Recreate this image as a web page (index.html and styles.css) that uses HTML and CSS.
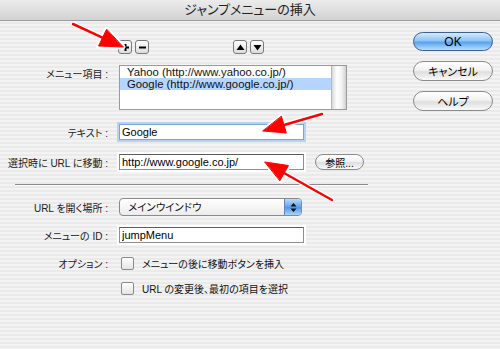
FILE: index.html
```html
<!DOCTYPE html>
<html lang="ja">
  <head>
    <meta charset="UTF-8" />
    <meta name="viewport" content="width=device-width, initial-scale=1.0" />
    <title>ジャンプメニューの挿入</title>
    <link rel="stylesheet" href="styles.css">
  </head>
  <body>
    <div class="window">
      <header class="titlebar">ジャンプメニューの挿入</header>

      <div class="dialog">
        <div class="form">
          <div class="toolbar">
            <span class="tool-group">
              <button class="tool" title="追加">
                <svg width="9" height="9" viewBox="0 0 9 9"><path d="M4.5 1v7M1 4.5h7" stroke="#000" stroke-width="2"/></svg>
              </button>
              <button class="tool" title="削除">
                <svg width="9" height="9" viewBox="0 0 9 9"><path d="M1 4.5h7" stroke="#000" stroke-width="2"/></svg>
              </button>
            </span>
            <span class="tool-group order">
              <button class="tool" title="上へ">
                <svg width="9" height="9" viewBox="0 0 9 9"><path d="M4.5 1.5L8.5 7H0.5z" fill="#000"/></svg>
              </button>
              <button class="tool" title="下へ">
                <svg width="9" height="9" viewBox="0 0 9 9"><path d="M0.5 2H8.5L4.5 7.5z" fill="#000"/></svg>
              </button>
            </span>
          </div>

          <div class="row list-row">
            <label class="label">メニュー項目 :</label>
            <div class="listbox">
              <ul class="items">
                <li>Yahoo (http://www.yahoo.co.jp/)</li>
                <li class="selected">Google (http://www.google.co.jp/)</li>
              </ul>
              <div class="scrollbar"></div>
            </div>
          </div>

          <div class="row text-row">
            <label class="label" for="itemText">テキスト :</label>
            <input class="field focused" id="itemText" type="text" value="Google" />
          </div>

          <div class="row url-row">
            <label class="label" for="itemUrl">選択時に URL に移動 :</label>
            <input class="field" id="itemUrl" type="text" value="http://www.google.co.jp/" />
            <button class="pill small">参照...</button>
          </div>

          <div class="separator"></div>

          <div class="row popup-row">
            <label class="label">URL を開く場所 :</label>
            <div class="popup">
              <span class="popup-text">メインウインドウ</span>
              <span class="popup-arrows">
                <svg width="7" height="11" viewBox="0 0 7 11"><path d="M3.5 1L6.5 4.5H0.5zM0.5 6.5H6.5L3.5 10z" fill="#111"/></svg>
              </span>
            </div>
          </div>

          <div class="row id-row">
            <label class="label" for="menuId">メニューの ID :</label>
            <input class="field" id="menuId" type="text" value="jumpMenu" />
          </div>

          <div class="row check-row first">
            <span class="label">オプション :</span>
            <span class="checkbox"></span>
            <span class="check-text">メニューの後に移動ボタンを挿入</span>
          </div>

          <div class="row check-row">
            <span class="label"></span>
            <span class="checkbox"></span>
            <span class="check-text">URL の変更後、最初の項目を選択</span>
          </div>
        </div>

        <div class="actions">
          <button class="pill default">OK</button>
          <button class="pill">キャンセル</button>
          <button class="pill">ヘルプ</button>
        </div>
      </div>

      <!-- 説明用の赤い矢印 -->
      <svg class="callouts" width="500" height="349" viewBox="0 0 500 349">
        <g stroke="#fff" stroke-width="5" stroke-linejoin="round" stroke-linecap="round" fill="#fff">
          <path d="M73 24L103 37.8"/>
          <path d="M123 47L98.5 46L106.5 29.5z"/>
          <path d="M322 114L284 125"/>
          <path d="M263 131L286.3 133L281.5 116.5z"/>
          <path d="M332 200L284 173"/>
          <path d="M265 162L288.5 165.5L280 180.5z"/>
        </g>
        <g stroke="#f00" stroke-width="2.5" stroke-linecap="round" fill="#f00">
          <path d="M73 24L103 37.8"/>
          <path d="M123 47L98.5 46L106.5 29.5z" stroke-width="1"/>
          <path d="M322 114L284 125"/>
          <path d="M263 131L286.3 133L281.5 116.5z" stroke-width="1"/>
          <path d="M332 200L284 173"/>
          <path d="M265 162L288.5 165.5L280 180.5z" stroke-width="1"/>
        </g>
      </svg>
    </div>
  </body>
</html>
```

FILE: styles.css
```css
body {
  margin: 0;
  font-family: "Liberation Sans", "Noto Sans CJK JP", sans-serif;
  font-feature-settings: "palt";
  color: #111;
}
.window {
  position: relative;
  width: 500px;
  height: 349px;
  overflow: hidden;
  background: repeating-linear-gradient(#f3f3f3 0 2px, #eaeaea 2px 4px);
}
.titlebar {
  height: 20px;
  line-height: 20px;
  text-align: center;
  font-size: 13px;
  color: #222;
  background: linear-gradient(#ececec, #d2d2d2);
  border-bottom: 1px solid #9c9c9c;
}
.dialog {
  display: flex;
}
.form {
  width: 370px;
}
.actions {
  margin-left: 43px;
  padding-top: 11px;
  display: flex;
  flex-direction: column;
  gap: 10px;
}

/* toolbar buttons */
.toolbar {
  margin-top: 19px;
  padding-left: 118px;
  height: 13px;
  display: flex;
}
.tool-group {
  display: flex;
  gap: 3px;
}
.tool-group.order {
  margin-left: 84px;
}
.tool {
  width: 14px;
  height: 14px;
  padding: 0;
  border: 1px solid #7a7a7a;
  border-radius: 3px;
  background: linear-gradient(#ffffff, #dcdcdc);
  display: flex;
  align-items: center;
  justify-content: center;
}

/* form rows */
.row {
  display: flex;
  align-items: center;
}
.label {
  width: 108px;
  margin-right: 11px;
  flex-shrink: 0;
  text-align: right;
  font-size: 10px;
  color: #222;
}
.list-row {
  margin-top: 12px;
  align-items: flex-start;
}
.list-row .label {
  padding-top: 1px;
}
.listbox {
  width: 228px;
  height: 45px;
  box-sizing: border-box;
  border: 1px solid #9a9a9a;
  background: #fff;
  display: flex;
}
.items {
  flex: 1;
  margin: 0;
  padding: 0;
  list-style: none;
  font-size: 11.3px;
}
.items li {
  height: 12px;
  line-height: 12px;
  padding-left: 7px;
}
.items li.selected {
  background: #b5d5ff;
}
.scrollbar {
  width: 14px;
  border-left: 1px solid #b8b8b8;
  background: linear-gradient(to right, #d8d8d8, #ffffff 35%, #f2f2f2 70%, #cfcfcf);
}
.field {
  width: 185px;
  height: 16px;
  box-sizing: border-box;
  margin: 0;
  padding: 0 0 0 2px;
  font-family: inherit;
  font-size: 11px;
  color: #000;
  border: 1px solid #8e8e8e;
  border-top-color: #5c5c5c;
  background: #fff;
  box-shadow: 0 0 0 2px #fff;
}
.field.focused {
  border: 1px solid #7aa5dc;
  box-shadow: 0 0 0 2px #b9d2f1;
}
.text-row {
  margin-top: 14px;
}
.url-row {
  margin-top: 14px;
}
.url-row .pill.small {
  margin-left: 11px;
}
.separator {
  margin: 14px 0 0 15px;
  width: 353px;
  height: 1px;
  background: #8c8c8c;
  border-bottom: 1px solid #fdfdfd;
}
.popup-row {
  margin-top: 12px;
}
.popup {
  width: 183px;
  height: 18px;
  box-sizing: border-box;
  border: 1px solid #8a8a8a;
  border-radius: 4px;
  background: linear-gradient(#ffffff, #ececec);
  display: flex;
  overflow: hidden;
}
.popup-text {
  flex: 1;
  padding-left: 8px;
  font-size: 10.5px;
  line-height: 16px;
}
.popup-arrows {
  width: 16px;
  border-left: 1px solid #5d87c2;
  background: linear-gradient(#b9dbfa, #5ea3ea 50%, #4e95e3 51%, #a8d4fb);
  display: flex;
  align-items: center;
  justify-content: center;
}
.id-row {
  margin-top: 11px;
}
.check-row {
  margin-top: 11px;
  height: 14px;
}
.check-row.first {
  margin-top: 13px;
}
.checkbox {
  width: 13px;
  height: 13px;
  box-sizing: border-box;
  margin-left: 2px;
  border: 1px solid #8a8a8a;
  border-radius: 2px;
  background: linear-gradient(#ffffff, #e4e4e4);
}
.check-text {
  margin-left: 8px;
  font-size: 10px;
}

/* aqua push buttons */
.pill {
  width: 80px;
  height: 20px;
  padding: 0;
  font-family: inherit;
  font-feature-settings: "palt";
  font-size: 11px;
  color: #000;
  border: 1px solid #8a8a8a;
  border-radius: 10px;
  background: linear-gradient(#ffffff, #f2f2f2 45%, #dedede 55%, #fafafa);
}
.pill.default {
  height: 19px;
  border-color: #3f5f93;
  background: linear-gradient(#d6ebfd, #8ec3f4 45%, #5aa2ec 55%, #b8e0ff);
  font-size: 12px;
}
.pill.small {
  width: 49px;
  height: 16px;
  font-size: 10px;
  border-radius: 8px;
}

.callouts {
  position: absolute;
  left: 0;
  top: 0;
  pointer-events: none;
}
```
